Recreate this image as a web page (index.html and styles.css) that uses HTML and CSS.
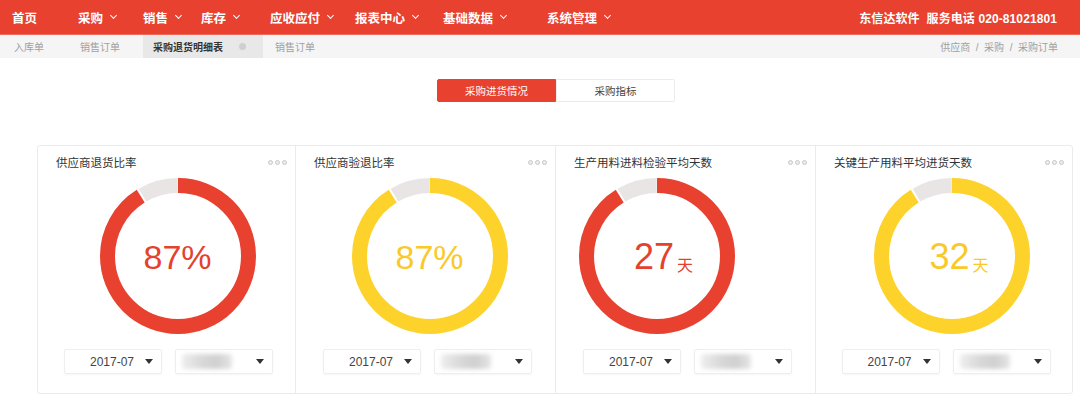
FILE: index.html
```html
<!DOCTYPE html>
<html lang="zh">
<head>
<meta charset="utf-8">
<title>采购退货明细表</title>
<link rel="stylesheet" href="styles.css">
</head>
<body>
<header class="topbar">
  <nav class="nav">
    <span class="nav-item">首页</span>
    <span class="nav-item">采购<i class="chev"></i></span>
    <span class="nav-item">销售<i class="chev"></i></span>
    <span class="nav-item">库存<i class="chev"></i></span>
    <span class="nav-item">应收应付<i class="chev"></i></span>
    <span class="nav-item">报表中心<i class="chev"></i></span>
    <span class="nav-item">基础数据<i class="chev"></i></span>
    <span class="nav-item">系统管理<i class="chev"></i></span>
  </nav>
  <div class="brand">东信达软件&nbsp;&nbsp;服务电话 020-81021801</div>
</header>
<div class="tabbar">
  <div class="tabs">
    <span class="tab t1">入库单</span>
    <span class="tab t2">销售订单</span>
    <span class="tab active">采购退货明细表<i class="close"></i></span>
    <span class="tab t4">销售订单</span>
  </div>
  <div class="crumbs">供应商&nbsp;&nbsp;/&nbsp;&nbsp;采购&nbsp;&nbsp;/&nbsp;&nbsp;采购订单</div>
</div>
<main class="main">
  <div class="seg">
    <span class="seg-btn on">采购进货情况</span>
    <span class="seg-btn">采购指标</span>
  </div>
  <section class="cards">
    <div class="card">
      <div class="card-head"><span class="card-title">供应商退货比率</span><span class="dots"><i></i><i></i><i></i></span></div>
      <div class="donut-wrap c1">
        <svg class="donut" viewBox="0 0 160 160" width="160" height="160">
          <circle class="ring-gray" cx="80" cy="80" r="70.5" stroke-dasharray="37 443" stroke-dashoffset="-405"/>
          <circle class="ring red" cx="80" cy="80" r="70.5" stroke-dasharray="403 443"/>
        </svg>
        <div class="val red-t">87%</div>
      </div>
      <div class="selects">
        <div class="sel"><span class="sel-txt">2017-07</span><i class="caret"></i></div>
        <div class="sel"><span class="blur"></span><i class="caret"></i></div>
      </div>
    </div>
    <div class="card">
      <div class="card-head"><span class="card-title">供应商验退比率</span><span class="dots"><i></i><i></i><i></i></span></div>
      <div class="donut-wrap c2">
        <svg class="donut" viewBox="0 0 160 160" width="160" height="160">
          <circle class="ring-gray" cx="80" cy="80" r="70.5" stroke-dasharray="37 443" stroke-dashoffset="-405"/>
          <circle class="ring yellow" cx="80" cy="80" r="70.5" stroke-dasharray="403 443"/>
        </svg>
        <div class="val yellow-t">87%</div>
      </div>
      <div class="selects">
        <div class="sel"><span class="sel-txt">2017-07</span><i class="caret"></i></div>
        <div class="sel"><span class="blur"></span><i class="caret"></i></div>
      </div>
    </div>
    <div class="card">
      <div class="card-head"><span class="card-title">生产用料进料检验平均天数</span><span class="dots"><i></i><i></i><i></i></span></div>
      <div class="donut-wrap c3">
        <svg class="donut" viewBox="0 0 160 160" width="160" height="160">
          <circle class="ring-gray" cx="80" cy="80" r="70.5" stroke-dasharray="37 443" stroke-dashoffset="-405"/>
          <circle class="ring red" cx="80" cy="80" r="70.5" stroke-dasharray="403 443"/>
        </svg>
        <div class="val days red-t">27<small>天</small></div>
      </div>
      <div class="selects">
        <div class="sel"><span class="sel-txt">2017-07</span><i class="caret"></i></div>
        <div class="sel"><span class="blur"></span><i class="caret"></i></div>
      </div>
    </div>
    <div class="card">
      <div class="card-head"><span class="card-title">关键生产用料平均进货天数</span><span class="dots"><i></i><i></i><i></i></span></div>
      <div class="donut-wrap c4">
        <svg class="donut" viewBox="0 0 160 160" width="160" height="160">
          <circle class="ring-gray" cx="80" cy="80" r="70.5" stroke-dasharray="37 443" stroke-dashoffset="-405"/>
          <circle class="ring yellow" cx="80" cy="80" r="70.5" stroke-dasharray="403 443"/>
        </svg>
        <div class="val days yellow-t">32<small>天</small></div>
      </div>
      <div class="selects">
        <div class="sel"><span class="sel-txt">2017-07</span><i class="caret"></i></div>
        <div class="sel"><span class="blur"></span><i class="caret"></i></div>
      </div>
    </div>
  </section>
</main>
</body>
</html>
```
FILE: styles.css
```css
* { box-sizing: border-box; }
html, body { margin: 0; padding: 0; background: #fff; }
body {
  width: 1080px;
  height: 396px;
  overflow: hidden;
  font-family: "Liberation Sans", "Noto Sans CJK SC", sans-serif;
  color: #333;
}
.topbar {
  height: 35px;
  background: #e8412f;
  display: flex;
  align-items: center;
  justify-content: space-between;
  padding: 0 23px 0 12px;
  color: #fff;
  font-size: 12.5px;
  font-weight: bold;
  border-bottom: 1px solid #ef6a5a;
}
.nav {
  display: grid;
  grid-template-columns: 66px 65px 58px 69px 85px 88px 104px auto;
}
.nav-item { display: flex; align-items: center; white-space: nowrap; }
.chev {
  display: inline-block;
  width: 5px; height: 5px;
  border-right: 1.5px solid #fff;
  border-bottom: 1.5px solid #fff;
  transform: rotate(45deg);
  margin: -3px 0 0 8px;
}
.brand { font-size: 12px; letter-spacing: 0.1px; }
.tabbar {
  height: 23px;
  background: #f5f5f5;
  display: flex;
  align-items: stretch;
  justify-content: space-between;
  padding: 0 22px 0 0;
  font-size: 10px;
  color: #a0a0a0;
}
.tabs { display: flex; align-items: stretch; }
.tab { display: flex; align-items: center; }
.t1 { padding-left: 14px; width: 80px; }
.t2 { width: 63px; }
.tab.active {
  background: #e8e8e8;
  color: #333;
  padding: 0 10px;
  width: 120px;
  font-weight: bold;
}
.close {
  display: inline-block;
  width: 7px; height: 7px;
  border-radius: 50%;
  background: #cfcfcf;
  margin-left: 16px;
}
.t4 { padding-left: 12px; }
.crumbs { display: flex; align-items: center; }
.main { padding-top: 21px; }
.seg {
  display: flex;
  width: 238px;
  margin: 0 0 0 437px;
  height: 23px;
  font-size: 10.5px;
}
.seg-btn {
  flex: 1;
  display: flex;
  align-items: center;
  justify-content: center;
  border: 1px solid #ececec;
  color: #444;
  border-radius: 0 2px 2px 0;
}
.seg-btn.on {
  background: #e8412f;
  border-color: #e8412f;
  color: #fff;
  border-radius: 2px 0 0 2px;
}
.cards {
  margin: 43px 7px 0 37px;
  height: 249px;
  border: 1px solid #ebebeb;
  border-radius: 3px;
  display: grid;
  grid-template-columns: 258px 260px 260px 1fr;
}
.card {
  border-right: 1px solid #ebebeb;
  display: flex;
  flex-direction: column;
}
.card:last-child { border-right: 0; }
.card-head {
  height: 32px;
  display: flex;
  align-items: center;
  justify-content: space-between;
  padding: 0 8px 0 18px;
}
.card-title { font-size: 11.5px; color: #333; }
.dots { display: flex; gap: 2px; }
.dots i {
  display: block;
  width: 5px; height: 5px;
  border-radius: 50%;
  border: 1px solid #c8c8c8;
  background: #ececec;
}
.donut-wrap {
  position: relative;
  width: 160px;
  height: 160px;
  margin: -2px auto 0;
}
.c1 { transform: translateX(11px); }
.c2 { transform: translateX(4px); }
.c3 { transform: translateX(-29px); }
.c4 { transform: translateX(8px); }
.donut { display: block; }
.ring, .ring-gray {
  fill: none;
  stroke-width: 15;
  transform: rotate(-90deg);
  transform-origin: 80px 80px;
}
.ring-gray { stroke: #e9e5e5; }
.ring.red { stroke: #e8412f; }
.ring.yellow { stroke: #fdd22b; }
.val {
  position: absolute;
  inset: 0;
  display: flex;
  align-items: center;
  justify-content: center;
  font-size: 34px;
  padding-top: 2px;
}
.val.days { font-size: 36px; padding-left: 14px; }
.val small { font-size: 16px; margin-left: 3px; padding-top: 14px; }
.red-t { color: #e4412f; }
.yellow-t { color: #f9c92a; }
.selects {
  display: flex;
  justify-content: center;
  gap: 13px;
  margin-top: 13px;
  padding-left: 4px;
}
.sel {
  width: 98px;
  height: 25px;
  border: 1px solid #eeeeee;
  border-radius: 2px;
  box-shadow: 0 1px 2px rgba(0,0,0,0.04);
  display: flex;
  align-items: center;
  justify-content: flex-end;
  padding-right: 8px;
  font-size: 12px;
  color: #444;
}
.sel-txt { margin-right: 11px; }
.blur {
  width: 50px;
  height: 15px;
  margin-right: 24px;
  background: linear-gradient(90deg, #eeeeee 0%, #d8d8d8 40%, #d0d0d0 70%, #e6e6e6 100%);
  filter: blur(2px);
  border-radius: 3px;
}
.caret {
  width: 0; height: 0;
  border-left: 4px solid transparent;
  border-right: 4px solid transparent;
  border-top: 5px solid #333;
}
```
